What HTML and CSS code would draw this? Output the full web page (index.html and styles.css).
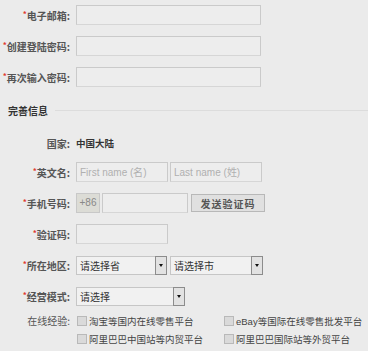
FILE: index.html
```html
<!DOCTYPE html>
<html lang="zh-CN">
<head>
    <meta charset="UTF-8">
    <meta name="viewport" content="width=device-width, initial-scale=1.0">
    <title>注册</title>
    <link rel="stylesheet" href="styles.css">
</head>
<body>
    <form class="reg-form">
        <div class="row">
            <label class="label"><span class="req">*</span>电子邮箱:</label>
            <input type="text" class="field w-long">
        </div>
        <div class="row">
            <label class="label"><span class="req">*</span>创建登陆密码:</label>
            <input type="password" class="field w-long">
        </div>
        <div class="row">
            <label class="label"><span class="req">*</span>再次输入密码:</label>
            <input type="password" class="field w-long">
        </div>

        <div class="section-title"><span>完善信息</span></div>

        <div class="row row-info">
            <label class="label">国家:</label>
            <span class="value">中国大陆</span>
        </div>
        <div class="row">
            <label class="label"><span class="req">*</span>英文名:</label>
            <input type="text" class="field w-half latin" placeholder="First name (名)">
            <input type="text" class="field w-half latin second" placeholder="Last name (姓)">
        </div>
        <div class="row">
            <label class="label"><span class="req">*</span>手机号码:</label>
            <span class="prefix">+86</span>
            <input type="text" class="field w-phone">
            <button type="button" class="btn-code">发送验证码</button>
        </div>
        <div class="row">
            <label class="label"><span class="req">*</span>验证码:</label>
            <input type="text" class="field w-half">
        </div>
        <div class="row">
            <label class="label"><span class="req">*</span>所在地区:</label>
            <div class="select w-prov"><span>请选择省</span><i class="arrow"></i></div>
            <div class="select w-city"><span>请选择市</span><i class="arrow"></i></div>
        </div>
        <div class="row">
            <label class="label"><span class="req">*</span>经营模式:</label>
            <div class="select w-mode"><span>请选择</span><i class="arrow"></i></div>
        </div>

        <div class="row row-check">
            <label class="label">在线经验:</label>
            <div class="checks">
                <label class="check"><i class="box"></i>淘宝等国内在线零售平台</label>
                <label class="check"><i class="box"></i><span class="latin">eBay</span>等国际在线零售批发平台</label>
                <label class="check"><i class="box"></i>阿里巴巴中国站等内贸平台</label>
                <label class="check"><i class="box"></i>阿里巴巴国际站等外贸平台</label>
            </div>
        </div>
    </form>
</body>
</html>
```

FILE: styles.css
```css
body {
    margin: 0;
    background-color: #ebebeb;
    font-family: "Noto Sans CJK SC", "Liberation Sans", sans-serif;
    font-size: 10px;
    color: #444;
}
.reg-form {
    padding-top: 5px;
}
.row {
    display: flex;
    align-items: center;
    height: 20px;
    margin-bottom: 11px;
}
.label {
    width: 70px;
    padding-right: 6px;
    text-align: right;
    font-weight: bold;
    color: #555;
    white-space: nowrap;
    flex-shrink: 0;
}
.req {
    color: #e03a2f;
    font-size: 8px;
    vertical-align: top;
}
.field {
    box-sizing: border-box;
    height: 20px;
    margin: 0;
    padding: 0 3px;
    background-color: #ededed;
    border: 1px solid #cacaca;
    border-bottom-color: #d6d6d6;
    font-size: 10px;
    color: #444;
    outline: none;
}
.field::placeholder {
    color: #b0b0b0;
}
.latin {
    font-family: "Liberation Sans", Arial, sans-serif;
}
.w-long {
    width: 185px;
}
.w-half {
    width: 92px;
}
.second {
    margin-left: 2px;
}
.w-phone {
    width: 86px;
    margin-left: 2px;
}
.section-title {
    display: flex;
    align-items: center;
    height: 20px;
    margin: 13px 0 13px 8px;
    font-weight: bold;
    color: #333;
}
.section-title::after {
    content: "";
    flex: 1;
    height: 1px;
    margin-left: 7px;
    background-color: #dcdcdc;
}
.row-info {
    margin-bottom: 9px;
}
.value {
    font-weight: bold;
    color: #333;
    font-size: 9.5px;
}
.prefix {
    box-sizing: border-box;
    width: 24px;
    height: 20px;
    line-height: 18px;
    text-align: center;
    background-color: #dcdcd6;
    border: 1px solid #c8c8c8;
    font-family: "Liberation Sans", Arial, sans-serif;
    color: #888;
}
.btn-code {
    box-sizing: border-box;
    width: 74px;
    height: 18px;
    margin-left: 3px;
    padding: 0;
    background-color: #e0e0e0;
    border: 1px solid #b8b8b8;
    font-family: inherit;
    font-size: 10px;
    font-weight: bold;
    letter-spacing: 1px;
    color: #555;
}
.select {
    box-sizing: border-box;
    display: flex;
    align-items: center;
    justify-content: space-between;
    height: 19px;
    padding-left: 3px;
    background-color: #f1f1f1;
    border: 1px solid #c6c6c6;
    color: #333;
}
.w-prov {
    width: 91px;
}
.w-city {
    width: 93px;
    margin-left: 3px;
}
.w-mode {
    width: 109px;
}
.arrow {
    position: relative;
    box-sizing: border-box;
    width: 12px;
    height: 19px;
    margin: -1px -1px -1px 0;
    background-color: #e2e2e2;
    border: 1px solid #8c8c8c;
}
.arrow::after {
    content: "";
    position: absolute;
    left: 3px;
    top: 7px;
    border-left: 2px solid transparent;
    border-right: 2px solid transparent;
    border-top: 3px solid #111;
}
.row-check {
    height: auto;
    align-items: flex-start;
    margin-top: -5px;
}
.row-check .label {
    line-height: 18px;
    font-weight: normal;
}
.checks {
    display: grid;
    grid-template-columns: 147px 147px;
    margin-left: 1px;
}
.check {
    display: flex;
    align-items: center;
    height: 18px;
    font-size: 9.5px;
    color: #444;
    white-space: nowrap;
}
.box {
    box-sizing: border-box;
    width: 10px;
    height: 10px;
    margin-right: 2px;
    background-color: #dadada;
    border: 1px solid #b9b9b9;
}
```
